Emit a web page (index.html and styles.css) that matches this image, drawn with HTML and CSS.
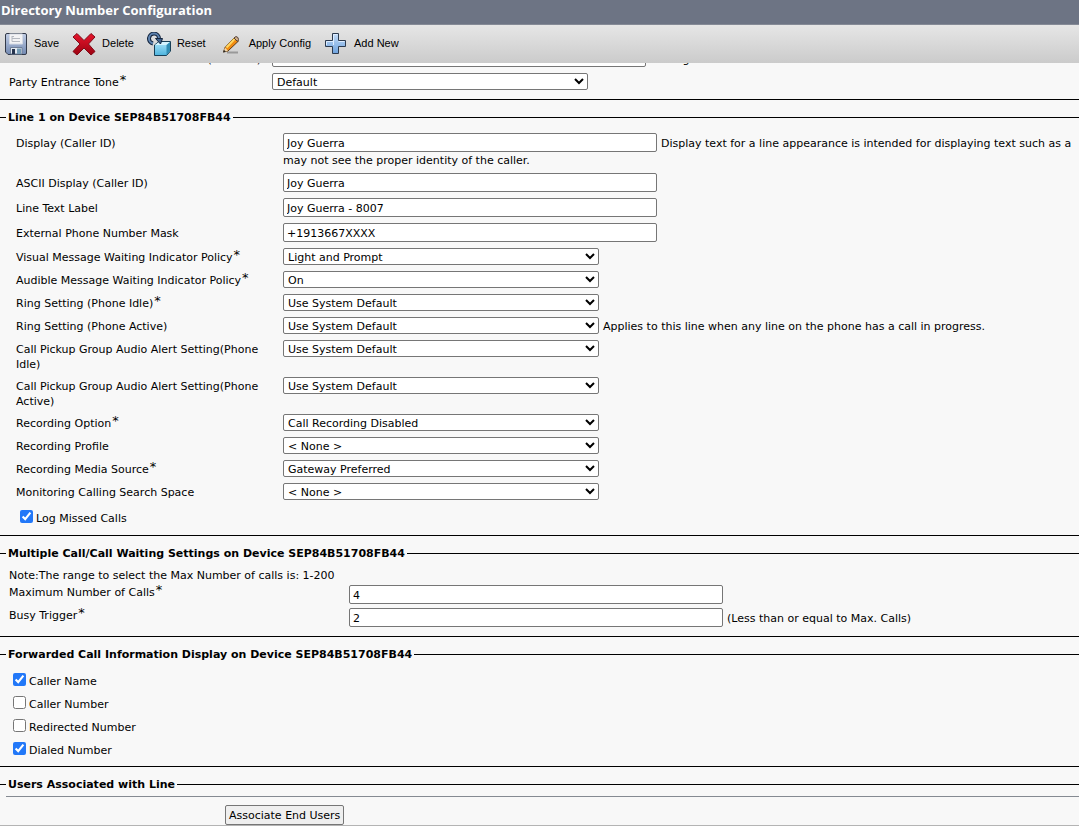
FILE: index.html
```html
<!DOCTYPE html>
<html lang="en">
<head>
<meta charset="utf-8">
<title>Directory Number Configuration</title>
<link rel="stylesheet" href="styles.css">
</head>
<body>
<header class="title-bar"><h1>Directory Number Configuration</h1></header>
<nav class="toolbar">
  <button type="button"><svg width="24" height="24" viewBox="0 0 24 24">
    <defs>
      <linearGradient id="disk" x2="0" y2="1"><stop offset="0" stop-color="#c3cfe6"/><stop offset="1" stop-color="#7289b2"/></linearGradient>
      <linearGradient id="red" x2="0" y2="1"><stop offset="0" stop-color="#e8152c"/><stop offset="1" stop-color="#9c0312"/></linearGradient>
      <linearGradient id="cube" x2="0" y2="1"><stop offset="0" stop-color="#aee6fb"/><stop offset="1" stop-color="#4db4de"/></linearGradient>
      <linearGradient id="plus" x2="0" y2="1"><stop offset="0" stop-color="#c4dcf7"/><stop offset="1" stop-color="#6fa3de"/></linearGradient>
    </defs>
    <path d="M3 1.5H21Q22.5 1.5 22.5 3V21Q22.5 22.5 21 22.5H4L1.5 20V3Q1.500 1.500 3 1.500Z" fill="url(#disk)" stroke="#333a49"/>
    <path d="M5.500 2H18.500V12H5.500Z" fill="#f3f3f5" stroke="#d5dae4"/>
    <path d="M8 4.500H10M8 4V9.500M8 6.500H16M8 9.500H16" stroke="#b4b8c0" fill="none"/>
    <path d="M6.500 15.500H18V22H6.500Z" fill="#e3e9f0" stroke="#6f7f98"/>
    <path d="M8 17H11V22H8Z" fill="#25334d"/><path d="M13 16.500H17V22H13Z" fill="#759bb5"/>
  </svg>Save</button>
  <button type="button"><svg width="24" height="24" viewBox="0 0 24 24">
    <path d="M5 1.500L12 8.500L19 1.500L23 5L16.500 12L23 19.500L19 23L12 16L5 23L1 19.500L8 12L1 5Z" fill="url(#red)" stroke="#800a18"/>
  </svg>Delete</button>
  <button type="button"><svg width="24" height="24" viewBox="0 0 24 24">
    <path d="M7.500 13L12 9.500H23.500V19L19.500 23.500H7.500Z" fill="url(#cube)" stroke="#173f57"/>
    <path d="M8 13L12 10H23L19.500 13Z" fill="#d5f4ff"/><path d="M19.500 13L23 10V19L19.500 23Z" fill="#318eb5"/>
    <path d="M6 11.500A5 5 0 1 1 12 6.500" fill="none" stroke="#15263f" stroke-width="4"/>
    <path d="M6 11.500A5 5 0 1 1 12 6.500" fill="none" stroke="#5e83b0" stroke-width="2"/>
    <path d="M8.500 6.500H15.500L13.500 12Z" fill="#3f638f" stroke="#15263f"/>
  </svg>Reset</button>
  <button type="button"><svg width="24" height="24" viewBox="0 0 24 24">
    <path d="M8 20.500H19" stroke="#999" stroke-width="2"/>
    <path d="M4.500 20L6 15.500L15.500 5.500L19.500 9L9 19Z" fill="#f08a10" stroke="#5d3a16"/>
    <path d="M7.500 15.500L16 6.500" stroke="#ffd75e" stroke-width="2"/>
    <path d="M15 6L17 4.500Q19.500 5 19.500 7.500L18.500 9.500Z" fill="#d3b08d" stroke="#554136"/>
    <path d="M6 15.500L9 19L4.500 20Z" fill="#f3d8aa"/><path d="M4 20.500L5 18L7 19.500Z" fill="#222"/>
  </svg>Apply Config</button>
  <button type="button"><svg width="24" height="24" viewBox="0 0 24 24">
    <path d="M8.500 1.500H14.500V8.500H21.500V14.500H14.500V21.500H8.500V14.500H1.500V8.500H8.500Z" fill="url(#plus)" stroke="#2c3a4e"/>
    <path d="M9.500 13V2.500H13.500M2.500 13V9.500H9.500M14.500 9.500H20.500" stroke="#deedff" fill="none"/>
  </svg>Add New</button>
</nav>
<main class="content">
  <section class="general">
    <div class="row text-row clipped">
      <label for="hold">Hold Reversion Notification Interval (seconds)</label>
      <div class="field"><input type="text" id="hold"><span>Setting the Hold Reversion</span></div>
    </div>
    <div class="row">
      <label for="tone">Party Entrance Tone<sup>*</sup></label>
      <div class="field"><select id="tone"><option>Default</option></select></div>
    </div>
  </section>

  <fieldset class="line">
    <legend>Line 1 on Device SEP84B51708FB44</legend>
    <div class="row text-row">
      <label for="display">Display (Caller ID)</label>
      <div>
        <div class="field"><input type="text" id="display" value="Joy Guerra"><span>Display text for a line appearance is intended for displaying text such as a</span></div>
        <p class="help">may not see the proper identity of the caller.</p>
      </div>
    </div>
    <div class="row text-row"><label for="ascii">ASCII Display (Caller ID)</label><div class="field"><input type="text" id="ascii" value="Joy Guerra"></div></div>
    <div class="row text-row"><label for="ltext">Line Text Label</label><div class="field"><input type="text" id="ltext" value="Joy Guerra - 8007"></div></div>
    <div class="row text-row"><label for="mask">External Phone Number Mask</label><div class="field"><input type="text" id="mask" value="+1913667XXXX"></div></div>
    <div class="row"><label for="visual">Visual Message Waiting Indicator Policy<sup>*</sup></label><div class="field"><select id="visual"><option>Light and Prompt</option></select></div></div>
    <div class="row"><label for="audible">Audible Message Waiting Indicator Policy<sup>*</sup></label><div class="field"><select id="audible"><option>On</option></select></div></div>
    <div class="row"><label for="idle">Ring Setting (Phone Idle)<sup>*</sup></label><div class="field"><select id="idle"><option>Use System Default</option></select></div></div>
    <div class="row"><label for="active">Ring Setting (Phone Active)</label><div class="field"><select id="active"><option>Use System Default</option></select><span>Applies to this line when any line on the phone has a call in progress.</span></div></div>
    <div class="row"><label for="pidle">Call Pickup Group Audio Alert Setting(Phone Idle)</label><div class="field"><select id="pidle"><option>Use System Default</option></select></div></div>
    <div class="row"><label for="pactive">Call Pickup Group Audio Alert Setting(Phone Active)</label><div class="field"><select id="pactive"><option>Use System Default</option></select></div></div>
    <div class="row"><label for="rec">Recording Option<sup>*</sup></label><div class="field"><select id="rec"><option>Call Recording Disabled</option></select></div></div>
    <div class="row"><label for="profile">Recording Profile</label><div class="field"><select id="profile"><option>&lt; None &gt;</option></select></div></div>
    <div class="row"><label for="media">Recording Media Source<sup>*</sup></label><div class="field"><select id="media"><option>Gateway Preferred</option></select></div></div>
    <div class="row"><label for="css">Monitoring Calling Search Space</label><div class="field"><select id="css"><option>&lt; None &gt;</option></select></div></div>
    <div class="check log"><input type="checkbox" id="log" checked><label for="log">Log Missed Calls</label></div>
  </fieldset>

  <fieldset class="calls">
    <legend>Multiple Call/Call Waiting Settings on Device SEP84B51708FB44</legend>
    <p class="note">Note:The range to select the Max Number of calls is: 1-200</p>
    <div class="row"><label for="max">Maximum Number of Calls<sup>*</sup></label><div class="field"><input type="text" id="max" value="4"></div></div>
    <div class="row"><label for="busy">Busy Trigger<sup>*</sup></label><div class="field"><input type="text" id="busy" value="2"><span>(Less than or equal to Max. Calls)</span></div></div>
  </fieldset>

  <fieldset class="forwarded">
    <legend>Forwarded Call Information Display on Device SEP84B51708FB44</legend>
    <div class="check"><input type="checkbox" id="cname" checked><label for="cname">Caller Name</label></div>
    <div class="check"><input type="checkbox" id="cnum"><label for="cnum">Caller Number</label></div>
    <div class="check"><input type="checkbox" id="rnum"><label for="rnum">Redirected Number</label></div>
    <div class="check"><input type="checkbox" id="dnum" checked><label for="dnum">Dialed Number</label></div>
  </fieldset>

  <fieldset class="users">
    <legend>Users Associated with Line</legend>
    <hr>
    <button type="button" class="associate">Associate End Users</button>
  </fieldset>
</main>
</body>
</html>
```
FILE: styles.css
```css
* { box-sizing: border-box; }
body {
  margin: 0;
  background: #f8f8f8;
  color: #000;
  font: 11px/15px Verdana, "DejaVu Sans", sans-serif;
}
.title-bar {
  padding: 3px 1px 6px;
  background: #6d7484;
  border-bottom: 1px solid #858a96;
}
.title-bar h1 {
  margin: 0;
  color: #fff;
  font: bold 13px/15px "Open Sans", "Noto Sans", sans-serif;
}
.toolbar {
  display: flex;
  gap: 13px;
  height: 38px;
  padding: 0 4px;
  background: linear-gradient(#e6e6e6, #cbcbcb);
}
.toolbar button {
  display: flex;
  align-items: center;
  gap: 6px;
  padding: 0 0 1px;
  border: 0;
  background: none;
  color: #000;
  font: 11px/15px "Liberation Sans", Arial, sans-serif;
  white-space: nowrap;
}
.content { overflow: hidden; border-bottom: 1px solid #b4b4b4; }
.row {
  display: grid;
  grid-template-columns: 267px minmax(0, 1fr);
  min-height: 23px;
  padding-bottom: 5px;
}
.row > label { padding: 2px 10px 0 0; }
.text-row { min-height: 25px; }
.text-row > label { padding-top: 3px; }
.field { display: flex; align-items: center; gap: 4px; white-space: nowrap; }
.row .field { align-self: start; min-height: 17px; }
.field span { padding-top: 1px; }
sup { margin-left: 1px; font-size: 13px; line-height: 0; vertical-align: 2px; }
input[type="text"], select {
  border: 1px solid #767676;
  border-radius: 2px;
  background: #fff;
  color: #000;
  font: inherit;
}
input[type="text"] { flex: none; width: 374px; height: 19px; padding: 2px 3px 0; }
select { flex: none; width: 316px; height: 17px; padding: 1px 0 0; }
.text-row .field, .calls .field { height: 19px; }
.help, .note { margin: 0; }

.general { padding: 0 0 3px 9px; border-bottom: 1px solid #000; }
.general .row { grid-template-columns: 263px minmax(0, 1fr); }
.general .clipped { margin-top: -15px; }
.clipped label { padding: 4px 0 0; white-space: nowrap; }
.clipped span { padding-top: 4px; }
fieldset {
  min-width: 0;
  margin: 10px 0 0;
  padding: 0;
  border: solid #000;
  border-width: 1px 0;
}
legend { margin-left: 6px; padding: 0 2px; font-weight: bold; }
.line { padding: 8px 0 6px 16px; }
.line legend { margin-left: -10px; }
.help { padding: 1px 0 0; }
.check { display: flex; gap: 3px; height: 23px; }
.check input { width: 13px; height: 13px; margin: 0; accent-color: #2278f8; }
.check label { padding-top: 1px; }
.log { padding: 4px 0 0 4px; }
.calls { padding: 7px 0 5px 9px; }
.calls legend { margin-left: -3px; }
.note { padding-bottom: 2px; }
.calls .row { grid-template-columns: 340px minmax(0, 1fr); padding-bottom: 4px; }
.calls .row > label { padding-top: 0; }
.forwarded { padding: 11px 0 1px 13px; }
.forwarded legend { margin-left: -7px; }
.users { border-bottom: 0; }
hr { height: 1px; margin: 4px 0 8px 6px; border: 0; background: #858a92; }
.associate {
  display: block;
  height: 20px;
  margin-left: 225px;
  padding: 0 3px;
  border: 1px solid #767676;
  border-radius: 2px;
  background: #efefef;
  color: #000;
  font: inherit;
}
```
